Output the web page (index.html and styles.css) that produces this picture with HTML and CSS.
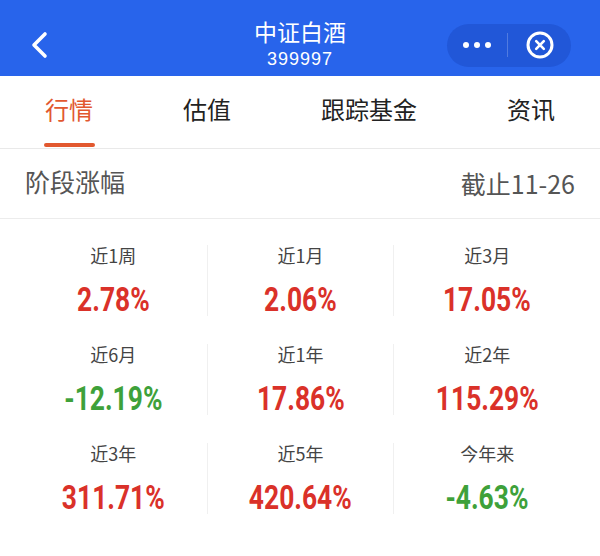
FILE: index.html
```html
<!DOCTYPE html>
<html lang="zh-CN">
<head>
<meta charset="utf-8">
<title>中证白酒</title>
<link rel="stylesheet" href="styles.css">
</head>
<body>
<div class="page">
  <header class="nav">
    <div class="nav-left">
      <svg class="back" width="18" height="28" viewBox="0 0 18 28" aria-hidden="true">
        <polyline points="14,3 3,14 14,25" fill="none" stroke="#fff" stroke-width="3.6" stroke-linecap="round" stroke-linejoin="round"/>
      </svg>
    </div>
    <div class="nav-title">
      <div class="title">中证白酒</div>
      <div class="code">399997</div>
    </div>
    <div class="nav-right">
      <div class="capsule">
        <div class="dots"><i></i><i></i><i></i></div>
        <div class="cap-div"></div>
        <svg class="close" width="30" height="30" viewBox="0 0 30 30" aria-hidden="true">
          <circle cx="15" cy="15" r="12" fill="none" stroke="#fff" stroke-width="3"/>
          <path d="M11.2 11.2 L18.8 18.8 M18.8 11.2 L11.2 18.8" stroke="#fff" stroke-width="2.6" stroke-linecap="round"/>
        </svg>
      </div>
    </div>
  </header>

  <nav class="tabs">
    <div class="tab active"><span class="tab-text">行情</span><span class="bar"></span></div>
    <div class="tab"><span class="tab-text">估值</span><span class="bar"></span></div>
    <div class="tab"><span class="tab-text">跟踪基金</span><span class="bar"></span></div>
    <div class="tab"><span class="tab-text">资讯</span><span class="bar"></span></div>
  </nav>

  <div class="section-head">
    <span class="section-title">阶段涨幅</span>
    <span class="section-date">截止11-26</span>
  </div>

  <div class="grid">
    <div class="cell"><div class="label">近1周</div><div class="value up"><span>2.78%</span></div></div>
    <div class="cell"><div class="label">近1月</div><div class="value up"><span>2.06%</span></div></div>
    <div class="cell"><div class="label">近3月</div><div class="value up"><span>17.05%</span></div></div>
    <div class="cell"><div class="label">近6月</div><div class="value down"><span>-12.19%</span></div></div>
    <div class="cell"><div class="label">近1年</div><div class="value up"><span>17.86%</span></div></div>
    <div class="cell"><div class="label">近2年</div><div class="value up"><span>115.29%</span></div></div>
    <div class="cell"><div class="label">近3年</div><div class="value up"><span>311.71%</span></div></div>
    <div class="cell"><div class="label">近5年</div><div class="value up"><span>420.64%</span></div></div>
    <div class="cell"><div class="label">今年来</div><div class="value down"><span>-4.63%</span></div></div>
  </div>
</div>
</body>
</html>
```

FILE: styles.css
```css
* { box-sizing: border-box; }
html, body { margin: 0; padding: 0; background: #fff; }
body {
  font-family: "Noto Sans CJK SC", "Noto Sans", sans-serif;
  width: 600px;
  height: 556px;
  overflow: hidden;
}
.page { width: 600px; }

.nav {
  height: 76px;
  background: #2864eb;
  padding-top: 14px;
  display: grid;
  grid-template-columns: 1fr auto 1fr;
  align-items: center;
  color: #fff;
}
.nav-left { padding-left: 31px; display: flex; align-items: center; }
.back { display: block; }
.nav-title { text-align: center; margin-bottom: 2px; }
.title { font-size: 23px; line-height: 26px; height: 26px; }
.code {
  font-size: 18px;
  line-height: 22px;
  height: 22px;
  margin-top: 4px;
  letter-spacing: 1px;
  font-family: "Liberation Sans", Arial, sans-serif;
}
.nav-right { display: flex; justify-content: flex-end; padding-right: 29px; }
.capsule {
  width: 124px;
  height: 43px;
  border-radius: 22px;
  background: #2157d8;
  display: flex;
  align-items: center;
  padding-left: 16px;
}
.dots { display: flex; gap: 5px; width: 28px; }
.dots i { display: block; width: 6px; height: 6px; border-radius: 50%; background: #fff; }
.cap-div { width: 1px; height: 24px; background: rgba(255,255,255,0.22); margin-left: 16px; }
.close { display: block; margin-left: 17px; }

.tabs {
  height: 73px;
  border-bottom: 1px solid #e9e9e9;
  display: flex;
  justify-content: space-between;
  padding: 0 45px;
}
.tab {
  display: flex;
  flex-direction: column;
  align-items: center;
  padding-top: 20px;
}
.tab-text { font-size: 24px; line-height: 26px; color: #222; }
.bar { width: calc(100% + 3px); height: 4px; border-radius: 2px; margin-top: 21px; background: transparent; }
.tab.active .tab-text { color: #e2582f; }
.tab.active .bar { background: #e2582f; }

.section-head {
  height: 70px;
  border-bottom: 1px solid #ececec;
  display: flex;
  justify-content: space-between;
  align-items: center;
  padding: 0 25px;
  color: #555;
}
.section-title { font-size: 25px; line-height: 30px; margin-top: -6px; }
.section-date { font-size: 25px; line-height: 30px; margin-top: -2px; }

.grid {
  display: grid;
  grid-template-columns: repeat(3, 1fr);
  row-gap: 28px;
  padding: 26px 20px 0;
}
.cell {
  display: flex;
  flex-direction: column;
  align-items: center;
}
.cell:nth-child(3n+2), .cell:nth-child(3n+3) { border-left: 1px solid #f0f0f0; }
.label { font-size: 18px; line-height: 20px; color: #444; }
.value {
  margin-top: 19px;
  height: 32px;
  line-height: 32px;
  font-family: "Roboto", "Liberation Sans", sans-serif;
  font-weight: 700;
  font-size: 33px;
  white-space: nowrap;
}
.value span { display: inline-block; transform: scaleX(0.8); }
.value.up { color: #da3129; }
.value.down { color: #3ea13a; }
```
